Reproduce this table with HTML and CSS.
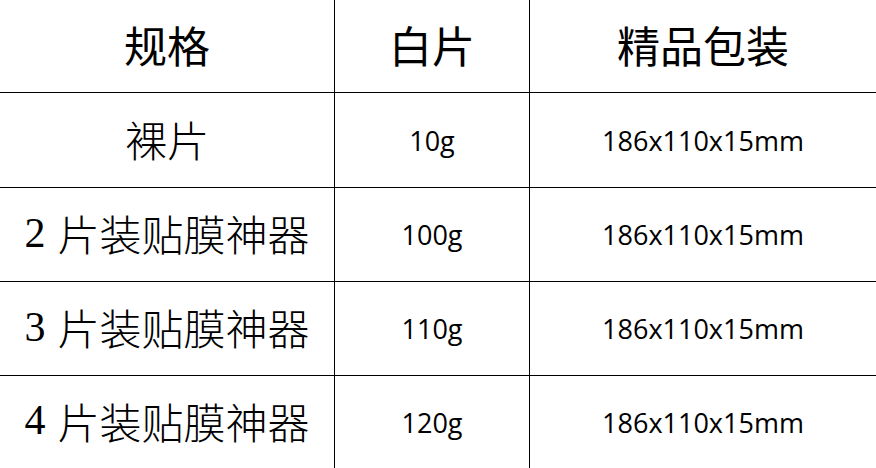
FILE: index.html
```html
<!DOCTYPE html>
<html lang="zh-CN">
<head>
<meta charset="utf-8">
<title>规格</title>
<link rel="stylesheet" href="styles.css">
</head>
<body>
<div class="spec-table">
  <div class="cell head">规格</div>
  <div class="cell head">白片</div>
  <div class="cell head">精品包装</div>

  <div class="cell name">裸片</div>
  <div class="cell num">10g</div>
  <div class="cell num">186x110x15mm</div>

  <div class="cell name"><span class="digit">2</span>片装贴膜神器</div>
  <div class="cell num">100g</div>
  <div class="cell num">186x110x15mm</div>

  <div class="cell name"><span class="digit">3</span>片装贴膜神器</div>
  <div class="cell num">110g</div>
  <div class="cell num">186x110x15mm</div>

  <div class="cell name"><span class="digit">4</span>片装贴膜神器</div>
  <div class="cell num">120g</div>
  <div class="cell num">186x110x15mm</div>
</div>
</body>
</html>
```
FILE: styles.css
```css
html, body {
  margin: 0;
  padding: 0;
  background: #fff;
}

.spec-table {
  width: 876px;
  height: 468px;
  display: grid;
  grid-template-columns: 334px 194px 346px;
  grid-template-rows: 92px 94px 93px 93px 92px;
  gap: 1px;
  background: #000;
  color: #000;
}

.cell {
  background: #fff;
  display: flex;
  align-items: center;
  justify-content: center;
  white-space: nowrap;
}

.head {
  font-family: "Noto Sans CJK SC", sans-serif;
  font-size: 43px;
  font-weight: 400;
  padding-bottom: 5px;
}

.name {
  font-family: "Noto Sans CJK SC", sans-serif;
  font-size: 42px;
  font-weight: 300;
  padding-bottom: 4px;
}

.digit {
  font-family: "Liberation Serif", serif;
  font-size: 42px;
  margin-right: 12px;
}

.num {
  font-family: "Open Sans", sans-serif;
  font-size: 27px;
}
```
